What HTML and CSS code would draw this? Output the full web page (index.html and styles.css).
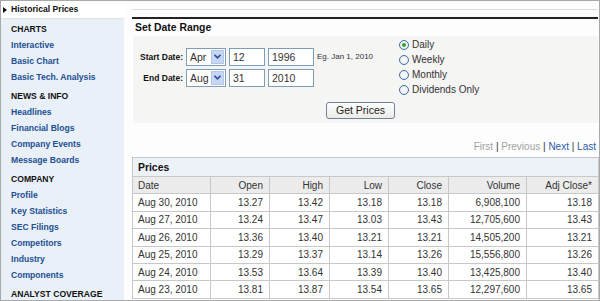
FILE: index.html
```html
<!DOCTYPE html>
<html lang="en">
<head>
    <meta charset="UTF-8">
    <link rel="stylesheet" href="styles.css">
    <title>Historical Prices</title>
</head>
<body>
    <div class="frame">
        <div class="sidebar">
            <div class="crumb"><span class="arrow"></span>Historical Prices</div>
            <div class="nav">
                <div class="nav-head first">CHARTS</div>
                <a href="#">Interactive</a>
                <a href="#">Basic Chart</a>
                <a href="#">Basic Tech. Analysis</a>
                <div class="nav-head">NEWS &amp; INFO</div>
                <a href="#">Headlines</a>
                <a href="#">Financial Blogs</a>
                <a href="#">Company Events</a>
                <a href="#">Message Boards</a>
                <div class="nav-head">COMPANY</div>
                <a href="#">Profile</a>
                <a href="#">Key Statistics</a>
                <a href="#">SEC Filings</a>
                <a href="#">Competitors</a>
                <a href="#">Industry</a>
                <a href="#">Components</a>
                <div class="nav-head">ANALYST COVERAGE</div>
            </div>
        </div>

        <div class="main">
            <div class="topline"></div>
            <div class="title">Set Date Range</div>
            <div class="panel">
                <div class="panel-top">
                    <div class="dates">
                        <div class="date-row">
                            <label>Start Date:</label>
                            <div class="select"><span>Apr</span><span class="drop"><svg width="7" height="5" viewBox="0 0 7 5"><path d="M0.5 0.8 L3.5 3.8 L6.5 0.8" fill="none" stroke="#2b4f9a" stroke-width="1.6"/></svg></span></div>
                            <input class="day" type="text" value="12">
                            <input class="year" type="text" value="1996">
                            <span class="hint">Eg. Jan 1, 2010</span>
                        </div>
                        <div class="date-row">
                            <label>End Date:</label>
                            <div class="select"><span>Aug</span><span class="drop"><svg width="7" height="5" viewBox="0 0 7 5"><path d="M0.5 0.8 L3.5 3.8 L6.5 0.8" fill="none" stroke="#2b4f9a" stroke-width="1.6"/></svg></span></div>
                            <input class="day" type="text" value="31">
                            <input class="year" type="text" value="2010">
                        </div>
                    </div>
                    <div class="radios">
                        <div class="radio"><span class="dot checked"></span>Daily</div>
                        <div class="radio"><span class="dot"></span>Weekly</div>
                        <div class="radio"><span class="dot"></span>Monthly</div>
                        <div class="radio"><span class="dot"></span>Dividends Only</div>
                    </div>
                </div>
                <div class="actions">
                    <button>Get Prices</button>
                </div>
            </div>

            <div class="pager">
                <span class="off">First</span> | <span class="off">Previous</span> | <a href="#">Next</a> | <a href="#">Last</a>
            </div>

            <table class="prices">
                <colgroup>
                    <col class="c-date">
                    <col class="c-open">
                    <col class="c-high">
                    <col class="c-low">
                    <col class="c-close">
                    <col class="c-vol">
                    <col class="c-adj">
                </colgroup>
                <thead>
                    <tr class="caption"><th colspan="7">Prices</th></tr>
                    <tr class="cols">
                        <th>Date</th>
                        <th>Open</th>
                        <th>High</th>
                        <th>Low</th>
                        <th>Close</th>
                        <th>Volume</th>
                        <th>Adj Close*</th>
                    </tr>
                </thead>
                <tbody>
                    <tr><td>Aug 30, 2010</td><td>13.27</td><td>13.42</td><td>13.18</td><td>13.18</td><td>6,908,100</td><td>13.18</td></tr>
                    <tr><td>Aug 27, 2010</td><td>13.24</td><td>13.47</td><td>13.03</td><td>13.43</td><td>12,705,600</td><td>13.43</td></tr>
                    <tr><td>Aug 26, 2010</td><td>13.36</td><td>13.40</td><td>13.21</td><td>13.21</td><td>14,505,200</td><td>13.21</td></tr>
                    <tr><td>Aug 25, 2010</td><td>13.29</td><td>13.37</td><td>13.14</td><td>13.26</td><td>15,556,800</td><td>13.26</td></tr>
                    <tr><td>Aug 24, 2010</td><td>13.53</td><td>13.64</td><td>13.39</td><td>13.40</td><td>13,425,800</td><td>13.40</td></tr>
                    <tr><td>Aug 23, 2010</td><td>13.81</td><td>13.87</td><td>13.54</td><td>13.65</td><td>12,297,600</td><td>13.65</td></tr>
                </tbody>
            </table>
        </div>
    </div>
</body>
</html>
```

FILE: styles.css
```css
* {
    box-sizing: border-box;
}

body {
    margin: 0;
    font-family: "Liberation Sans", Arial, sans-serif;
    color: #333;
}

.frame {
    width: 600px;
    height: 301px;
    border: 1px solid #a9a9a9;
    display: flex;
    overflow: hidden;
    background: #fdfdfd;
}

/* left navigation */
.sidebar {
    width: 123px;
    flex: none;
    display: flex;
    flex-direction: column;
}

.crumb {
    height: 18px;
    flex: none;
    line-height: 17px;
    font-size: 8.6px;
    font-weight: bold;
    color: #111;
    background: #fff;
    border-bottom: 1px solid #e2e2e2;
    padding-left: 2px;
    display: flex;
    align-items: center;
}

.arrow {
    width: 0;
    height: 0;
    border-top: 3px solid transparent;
    border-bottom: 3px solid transparent;
    border-left: 4px solid #111;
    margin-right: 4px;
}

.nav {
    flex: 1;
    background: #e9f0f8;
    padding: 2px 0 0 10px;
    display: flex;
    flex-direction: column;
}

.nav a,
.nav-head {
    flex: none;
    font-size: 8.6px;
    font-weight: bold;
    line-height: 16px;
    height: 16px;
    text-decoration: none;
}

.nav a {
    color: #1d4f92;
}

.nav-head {
    color: #111;
    margin-top: 3px;
}

.nav-head.first {
    margin-top: 0;
}

/* main column */
.main {
    width: 466px;
    margin-left: 8px;
    display: flex;
    flex-direction: column;
}

.main > * {
    flex: none;
}

.topline {
    height: 18px;
    border-top: 8px solid transparent;
    background: linear-gradient(#dcdcdc, #dcdcdc) top / 100% 1px no-repeat;
    border-bottom: 2px solid #222;
}

.title {
    height: 17px;
    line-height: 17px;
    font-size: 10.4px;
    font-weight: bold;
    color: #111;
    padding-left: 3px;
}

.panel {
    height: 87px;
    background: #f5f5f4;
    margin-left: 1px;
}

.panel-top {
    display: flex;
}

.dates {
    width: 265px;
    padding-top: 12px;
    display: flex;
    flex-direction: column;
    gap: 4px;
}

.date-row {
    display: flex;
    align-items: center;
    height: 17px;
}

.date-row label {
    width: 50px;
    text-align: right;
    font-size: 8.5px;
    font-weight: bold;
    color: #111;
    margin-right: 3px;
}

.select {
    width: 40px;
    height: 18px;
    border: 1px solid #7f9db9;
    background: #fff;
    display: flex;
    align-items: center;
    justify-content: space-between;
    font-size: 10.5px;
    color: #333;
    padding: 1px 1px 1px 3px;
    margin-right: 3px;
}

.drop {
    width: 13px;
    height: 14px;
    background: #c7d6f3;
    border: 1px solid #b4c6ea;
    display: flex;
    align-items: center;
    justify-content: center;
}

.date-row input {
    height: 18px;
    border: 1px solid #7f9db9;
    font-family: "Liberation Sans", Arial, sans-serif;
    font-size: 10.5px;
    color: #333;
    padding: 0 3px;
    margin: 0 3px 0 0;
    outline: none;
}

.day {
    width: 36px;
}

.year {
    width: 46px;
}

.hint {
    font-size: 8px;
    color: #333;
    white-space: nowrap;
}

.radios {
    padding-top: 1px;
    display: flex;
    flex-direction: column;
}

.radio {
    height: 15px;
    display: flex;
    align-items: center;
    font-size: 10px;
    color: #333;
}

.dot {
    width: 10px;
    height: 10px;
    border-radius: 50%;
    border: 1px solid #3d6fa8;
    background: radial-gradient(#fff, #e4e4e4);
    margin: 0 3px 0 1px;
    display: flex;
    align-items: center;
    justify-content: center;
}

.dot.checked::after {
    content: "";
    width: 4px;
    height: 4px;
    border-radius: 50%;
    background: #2ba82b;
}

.actions {
    padding: 3px 0 0 193px;
}

.actions button {
    width: 69px;
    height: 17px;
    border: 1px solid #6f819c;
    border-radius: 3px;
    background: linear-gradient(#ffffff, #ecebe6);
    font-family: "Liberation Sans", Arial, sans-serif;
    font-size: 10.5px;
    color: #222;
    padding: 0;
}

/* pagination */
.pager {
    height: 34px;
    padding: 18px 2px 0 0;
    text-align: right;
    font-size: 10px;
    color: #333;
}

.pager .off {
    color: #a2a2a2;
}

.pager a {
    color: #2b5ca6;
    text-decoration: none;
}

/* prices table */
table.prices {
    width: 466px;
    border-collapse: collapse;
    table-layout: fixed;
    font-size: 10px;
    border: 1px solid #c4c4c4;
}

.prices th,
.prices td {
    border: 1px solid #c8c8c8;
    padding: 0 6px 0 5px;
    text-align: right;
    font-weight: normal;
    color: #333;
    white-space: nowrap;
    overflow: hidden;
}

.prices tr {
    height: 17.4px;
}

.prices tr.caption {
    height: 19px;
}

.prices .caption th {
    text-align: left;
    font-size: 10.4px;
    font-weight: bold;
    color: #111;
    background: #edf2f9;
}

.prices .cols th {
    background: #ececec;
}

.prices th:first-child,
.prices td:first-child {
    text-align: left;
}

.c-date { width: 78px; }
.c-open { width: 59px; }
.c-high { width: 60px; }
.c-low { width: 59px; }
.c-close { width: 60px; }
.c-vol { width: 78px; }
.c-adj { width: 72px; }

.prices td {
    background: #fff;
}
```
